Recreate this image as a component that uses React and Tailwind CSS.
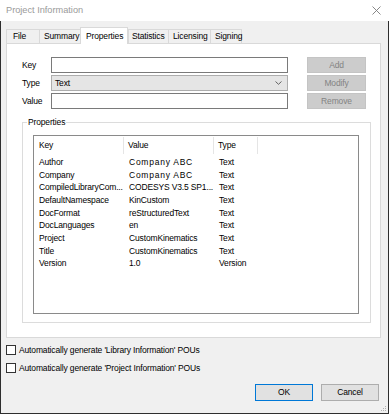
import React from "react";

const rows = [
  ["Author", "Company ABC", "Text", true],
  ["Company", "Company ABC", "Text", true],
  ["CompiledLibraryCom...", "CODESYS V3.5 SP1...", "Text"],
  ["DefaultNamespace", "KinCustom", "Text"],
  ["DocFormat", "reStructuredText", "Text"],
  ["DocLanguages", "en", "Text"],
  ["Project", "CustomKinematics", "Text"],
  ["Title", "CustomKinematics", "Text"],
  ["Version", "1.0", "Version"],
];

const tabs = [
  { label: "File", w: "w-[33px]", pl: "pl-[6px]" },
  { label: "Summary", w: "w-[41px]", pl: "pl-[4px]" },
  { label: "Properties", w: "w-[48px]", pl: "pl-[5px]", active: true },
  { label: "Statistics", w: "w-[40px]", pl: "pl-[3px]" },
  { label: "Licensing", w: "w-[42px]", pl: "pl-[4px]" },
  { label: "Signing", w: "w-[32px]", pl: "pl-[4px]", last: true },
];

function Tab({ label, w, pl, active, last }) {
  if (active) {
    return (
      <div className={`${w} ${pl} relative z-10 -mb-px flex h-[17px] items-center border-x border-t border-[#d9d9d9] bg-white`}>
        {label}
      </div>
    );
  }
  return (
    <div className={`${w} ${pl} flex h-[14px] items-center border-t border-l border-[#d9d9d9] bg-[#f0f0f0] ${last ? "border-r" : ""}`}>
      {label}
    </div>
  );
}

function DisabledButton({ children }) {
  return (
    <div className="flex h-[16px] w-[59px] items-center justify-center border border-[#c4c4c4] bg-[#cccccc] text-[#838383]">
      {children}
    </div>
  );
}

function Check({ children }) {
  return (
    <div className="flex h-[10px] items-center gap-[3px]">
      <div className="h-[10px] w-[10px] border border-[#333] bg-white" />
      <span>{children}</span>
    </div>
  );
}

export default function App() {
  return (
    <div className="relative flex h-[414px] w-[389px] flex-col overflow-hidden bg-[#f0f0f0] font-['Liberation_Sans',Arial,sans-serif] text-[8.5px] tracking-[-0.15px] text-black">
      {/* title bar */}
      <div className="flex h-[21px] shrink-0 items-center justify-between bg-white pl-[6px] pr-[8px]">
        <span className="text-[9.2px] tracking-normal text-[#9a9a9a]">Project Information</span>
        <svg width="9" height="9" viewBox="0 0 9 9" className="mb-[1px]">
          <path d="M0.5 0.5L8.5 8.5M8.5 0.5L0.5 8.5" stroke="#7a7a7a" strokeWidth="0.9" />
        </svg>
      </div>

      <div className="flex flex-1 flex-col border-x border-b border-[#2e2e2e] px-[5px] pt-[6px]">
        {/* tabs */}
        <div className="flex h-[16px] items-end">
          {tabs.map((t) => (
            <Tab key={t.label} {...t} />
          ))}
        </div>

        {/* tab page */}
        <div className="h-[295px] w-[375px] border border-[#d9d9d9] bg-white pl-[15px] pt-[13px]">
          <div className="flex">
            <div className="flex flex-col gap-[2px]">
              <div className="flex h-[16px] items-center">
                <span className="w-[29px]">Key</span>
                <div className="h-[16px] w-[237px] border border-[#7a7a7a] bg-white" />
              </div>
              <div className="flex h-[16px] items-center">
                <span className="w-[29px]">Type</span>
                <div className="flex h-[16px] w-[237px] items-center justify-between border border-[#adadad] bg-[#e5e5e5] pl-[3px] pr-[5px]">
                  <span>Text</span>
                  <svg width="7" height="4" viewBox="0 0 7 4">
                    <path d="M0.5 0.5L3.5 3.3L6.5 0.5" stroke="#555" strokeWidth="0.9" fill="none" />
                  </svg>
                </div>
              </div>
              <div className="flex h-[16px] items-center">
                <span className="w-[29px]">Value</span>
                <div className="h-[16px] w-[237px] border border-[#7a7a7a] bg-white" />
              </div>
            </div>
            <div className="ml-[19px] flex flex-col gap-[2px]">
              <DisabledButton>Add</DisabledButton>
              <DisabledButton>Modify</DisabledButton>
              <DisabledButton>Remove</DisabledButton>
            </div>
          </div>

          {/* group box */}
          <div className="relative mt-[13px] h-[201px] w-[349px] border border-[#dcdcdc] pl-[10px] pt-[12px]">
            <span className="absolute -top-[6px] left-[4px] bg-white px-[1px] leading-[10px]">Properties</span>
            <div className="h-[179px] w-[326px] border border-[#8a8a8a] bg-white">
              <div className="flex h-[18px] items-center pt-[1px]">
                <div className="flex h-full w-[90px] items-center border-r border-[#e5e5e5] pl-[5px]">Key</div>
                <div className="flex h-full w-[90px] items-center border-r border-[#e5e5e5] pl-[4px]">Value</div>
                <div className="flex h-full w-[44px] items-center border-r border-[#e5e5e5] pl-[4px]">Type</div>
              </div>
              <div className="pt-[2px]">
                {rows.map(([k, v, t, wide]) => (
                  <div key={k} className="flex h-[12.67px] items-center">
                    <div className="w-[90px] truncate pl-[5px]">{k}</div>
                    <div className={`w-[90px] truncate pl-[5px] ${wide ? "tracking-[0.75px]" : ""}`}>{v}</div>
                    <div className="w-[44px] pl-[5px]">{t}</div>
                  </div>
                ))}
              </div>
            </div>
          </div>
        </div>

        <div className="mt-[7px]">
          <Check>Automatically generate 'Library Information' POUs</Check>
        </div>
        <div className="mt-[8px]">
          <Check>Automatically generate 'Project Information' POUs</Check>
        </div>

        <div className="mt-[11px] flex justify-end gap-[8px] pr-[4px]">
          <div className="flex h-[17px] w-[58px] items-center justify-center border border-[#0078d7] bg-[#e1e1e1]">OK</div>
          <div className="flex h-[17px] w-[58px] items-center justify-center border border-[#adadad] bg-[#e1e1e1]">Cancel</div>
        </div>
      </div>

      {/* resize grip */}
      <svg width="6" height="6" viewBox="0 0 6 6" className="absolute bottom-[2px] right-[2px]">
        <rect x="4" y="0" width="1" height="1" fill="#b0b0b0" />
        <rect x="2" y="2" width="1" height="1" fill="#b0b0b0" />
        <rect x="4" y="2" width="1" height="1" fill="#b0b0b0" />
        <rect x="0" y="4" width="1" height="1" fill="#b0b0b0" />
        <rect x="2" y="4" width="1" height="1" fill="#b0b0b0" />
        <rect x="4" y="4" width="1" height="1" fill="#b0b0b0" />
      </svg>
    </div>
  );
}
